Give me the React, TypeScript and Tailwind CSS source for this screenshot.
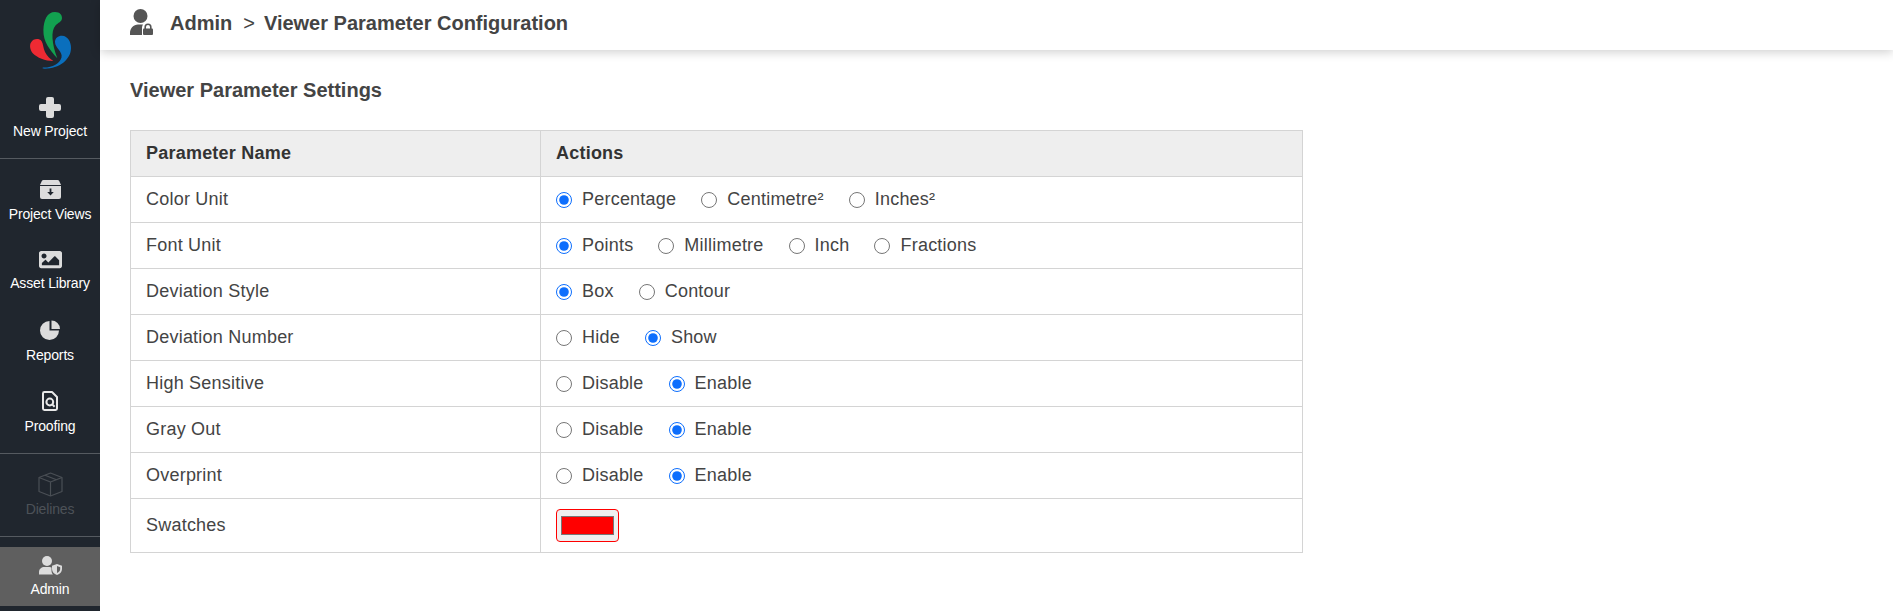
import React from 'react';
import { FaImage } from 'react-icons/fa';

const FONT = "font-['Liberation_Sans',Arial,sans-serif]";

const Logo = () => (
  <svg viewBox="0 0 100 80" className="block w-[100px] h-[80px]">
    <path fill="#12a150" d="M57.3 58.3C50 50 43 42 43.4 30C43.8 20 47 12 55 12C60 12 62 15 62 18C62 22 58 22.5 55.5 25.5C50.5 31 52 44 57.3 58.3Z" />
    <path fill="#0a6fbd" d="M42.7 67.6C52 68 60 63.5 61.5 57.5C63 51.5 55 48 55 42C55 38 58 35.7 62 35.7C68 36 71 42 71 48C71 60 58 69.5 42.7 68.6Z" />
    <path fill="#ee2a33" d="M53.4 61C45 61 37 57.5 33 53.5C30 50 29.3 45 31 42.5C33 38.5 39 38 41.5 41C43.5 44 43 48 45 52C47 56 50 59 53.4 61Z" />
  </svg>
);

const PlusIcon = () => (
  <svg viewBox="0 0 22 21" className="w-[22px] h-[21px]">
    <path fill="#dcdcdc" d="M9 0h4a2 2 0 0 1 2 2v5h5a2 2 0 0 1 2 2v3a2 2 0 0 1-2 2h-5v5a2 2 0 0 1-2 2H9a2 2 0 0 1-2-2v-5H2a2 2 0 0 1-2-2V9a2 2 0 0 1 2-2h5V2a2 2 0 0 1 2-2Z" />
  </svg>
);

const ArchiveIcon = () => (
  <svg viewBox="0 0 21 19" className="w-[21px] h-[19px]">
    <path fill="#dcdcdc" d="M3.5 0h14a2 2 0 0 1 1.7 1L21 5H0L1.8 1A2 2 0 0 1 3.5 0Z" />
    <path fill="#dcdcdc" d="M0 6h21v11a2 2 0 0 1-2 2H2a2 2 0 0 1-2-2Z" />
    <path fill="#20262e" d="M9.6 8.5h1.8v3.5h2.4l-3.3 3.4-3.3-3.4h2.4Z" />
  </svg>
);

const PieIcon = () => (
  <svg viewBox="0 0 20 20" className="w-[20px] h-[20px]">
    <path fill="#dcdcdc" d="M9.5 1V10.5H19A9.5 9.5 0 1 1 9.5 1Z" />
    <path fill="#dcdcdc" d="M11.5 0.5A8.5 8.5 0 0 1 20 9H11.5Z" />
  </svg>
);

const ProofIcon = () => (
  <svg viewBox="0 0 16 20" className="w-[16px] h-[20px]" fill="none" stroke="#e8e8e8">
    <path strokeWidth="2" strokeLinejoin="round" d="M1 2.4A1.4 1.4 0 0 1 2.4 1H10L15 6V17.6A1.4 1.4 0 0 1 13.6 19H2.4A1.4 1.4 0 0 1 1 17.6Z" />
    <circle cx="7.8" cy="11" r="3.4" strokeWidth="2" />
    <path strokeWidth="2" d="M10.2 13.4L12.6 15.8" />
  </svg>
);

const BoxIcon = () => (
  <svg viewBox="0 0 25 25" className="w-[25px] h-[25px]" fill="none" stroke="#4a4f55" strokeWidth="1.2" strokeLinejoin="round">
    <path d="M12.5 1L24 5.5V19.5L12.5 24L1 19.5V5.5Z" />
    <path d="M1 5.5L12.5 10L24 5.5M12.5 10V24" />
    <path d="M7 3.2L18.5 7.8" />
  </svg>
);

const AdminIcon = () => (
  <svg viewBox="0 0 23 19" className="w-[23px] h-[19px]">
    <circle cx="8" cy="5" r="5" fill="#dcdcdc" />
    <path fill="#dcdcdc" d="M0 18.5V16C0 13 2.5 11 5.5 11H10.5C11.5 11 12 11.2 12.5 11.5V15C12.5 16 13 17.5 14 18.5Z" />
    <path fill="#dcdcdc" d="M18 8L23 9.8V13C23 15.8 21 18 18 19C15 18 13 15.8 13 13V9.8Z" />
    <path fill="#5f5f5f" d="M18 10L21.2 11.2V13C21.2 14.8 20 16.2 18 17Z" />
  </svg>
);

const HeaderIcon = () => (
  <svg viewBox="0 0 23 26" className="w-[23px] h-[26px] shrink-0">
    <circle cx="10.5" cy="7" r="7" fill="#555555" />
    <path fill="#555555" d="M0 26V24C0 19.5 3.5 15.5 8 15.5H13C12.4 16.5 12 17.6 12 18.6V26Z" />
    <rect x="13" y="19.5" width="10" height="6.5" rx="1" fill="#555555" />
    <path fill="none" stroke="#555555" strokeWidth="1.6" d="M15.2 20V18a2.8 2.8 0 0 1 5.6 0V20" />
  </svg>
);

type RadioRow = { name: string; options: string[]; selected: string };

const ROWS: RadioRow[] = [
  { name: 'Color Unit', options: ['Percentage', 'Centimetre²', 'Inches²'], selected: 'Percentage' },
  { name: 'Font Unit', options: ['Points', 'Millimetre', 'Inch', 'Fractions'], selected: 'Points' },
  { name: 'Deviation Style', options: ['Box', 'Contour'], selected: 'Box' },
  { name: 'Deviation Number', options: ['Hide', 'Show'], selected: 'Show' },
  { name: 'High Sensitive', options: ['Disable', 'Enable'], selected: 'Enable' },
  { name: 'Gray Out', options: ['Disable', 'Enable'], selected: 'Enable' },
  { name: 'Overprint', options: ['Disable', 'Enable'], selected: 'Enable' },
];

const NavItem = ({ icon, label, className = '', labelClass = 'mt-[3px] text-white' }: { icon: React.ReactNode; label: string; className?: string; labelClass?: string }) => (
  <div className={`flex flex-col items-center ${className}`}>
    <div className="h-[22px] flex items-center justify-center">{icon}</div>
    <span className={`text-[14px] leading-[20px] tracking-[-0.15px] ${labelClass}`}>{label}</span>
  </div>
);

const Divider = ({ className = '' }: { className?: string }) => <div className={`h-px bg-[#555a60] ${className}`} />;

export default function App() {
  return (
    <div className={`flex h-screen overflow-hidden bg-white ${FONT}`}>
      <aside className="w-[100px] shrink-0 bg-[#20262e] flex flex-col">
        <Logo />
        <NavItem className="mt-[16px]" label="New Project" icon={<PlusIcon />} />
        <Divider className="mt-[17px]" />
        <NavItem className="mt-[19px]" labelClass="mt-[4px] text-white" label="Project Views" icon={<ArchiveIcon />} />
        <NavItem className="mt-[24px]" label="Asset Library" icon={<FaImage size={23} color="#dcdcdc" />} />
        <NavItem className="mt-[26px]" labelClass="mt-[4px] text-white" label="Reports" icon={<PieIcon />} />
        <NavItem className="mt-[25px]" labelClass="mt-[4px] text-white" label="Proofing" icon={<ProofIcon />} />
        <Divider className="mt-[17px]" />
        <NavItem className="mt-[19px]" labelClass="mt-[4px] text-[#4d5258]" label="Dielines" icon={<BoxIcon />} />
        <Divider className="mt-[17px]" />
        <NavItem className="mt-[10px] py-[7px] bg-[#5f5f5f]" label="Admin" icon={<AdminIcon />} />
      </aside>

      <main className="flex-1 min-w-0 flex flex-col">
        <header className="h-[50px] shrink-0 bg-white shadow-[0_2px_10px_rgba(0,0,0,0.2)] flex items-center pl-[30px] pb-[6px] text-[20px] font-bold text-[#444444]">
          <HeaderIcon />
          <span className="ml-[17px] translate-y-px">Admin</span>
          <span className="ml-[11px] font-normal translate-y-px">&gt;</span>
          <span className="ml-[9px] translate-y-px">Viewer Parameter Configuration</span>
        </header>

        <section className="px-[30px]">
          <h2 className="mt-[29px] text-[20px] leading-[22px] font-bold text-[#444444]">Viewer Parameter Settings</h2>
          <table className="mt-[29px] w-[1173px] border-collapse text-[18px] tracking-[0.22px] text-[#444444]">
            <thead>
              <tr className="bg-[#eeeeee] h-[46px] font-bold text-[#333333]">
                <th className="w-[410px] border border-[#d4d4d4] pl-[15px] text-left">Parameter Name</th>
                <th className="border border-[#d4d4d4] pl-[15px] text-left">Actions</th>
              </tr>
            </thead>
            <tbody>
              {ROWS.map((row) => (
                <tr key={row.name} className="h-[46px]">
                  <td className="border border-[#d4d4d4] pl-[15px]">{row.name}</td>
                  <td className="border border-[#d4d4d4] pl-[15px]">
                    <div className="flex items-center gap-[25px]">
                      {row.options.map((opt) => (
                        <label key={opt} className="flex items-center gap-[10px]">
                          <input type="radio" name={row.name} defaultChecked={opt === row.selected} className="m-0 w-[16px] h-[16px] accent-[#0d6efd]" />
                          <span>{opt}</span>
                        </label>
                      ))}
                    </div>
                  </td>
                </tr>
              ))}
              <tr className="h-[54px]">
                <td className="border border-[#d4d4d4] pl-[15px]">Swatches</td>
                <td className="border border-[#d4d4d4] pl-[15px]">
                  <input type="color" defaultValue="#ff0000" className="block w-[63px] h-[33px] p-0.5 bg-[#efefef] border border-[#ff0000] rounded-[4px]" />
                </td>
              </tr>
            </tbody>
          </table>
        </section>
      </main>
    </div>
  );
}
